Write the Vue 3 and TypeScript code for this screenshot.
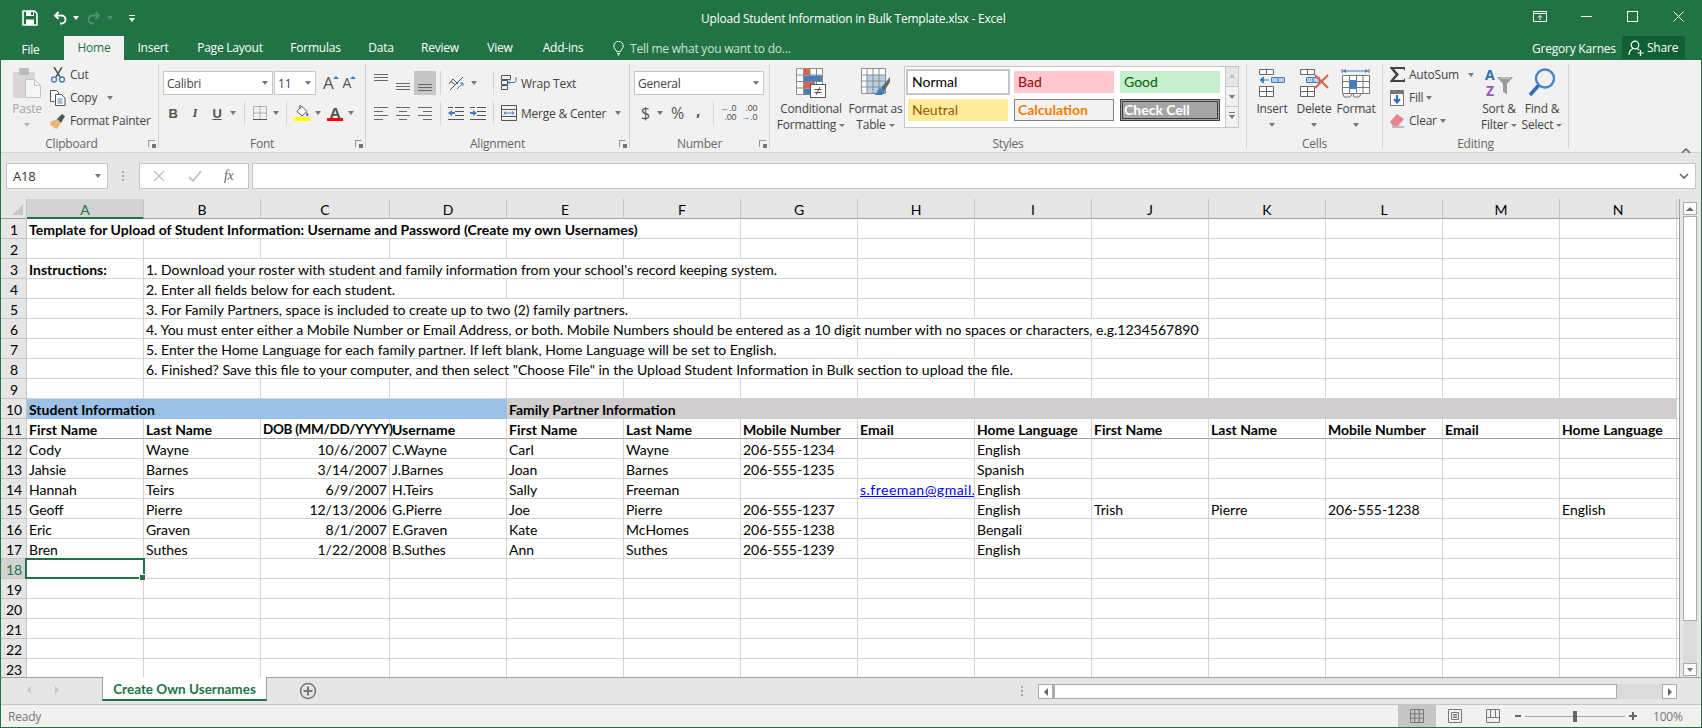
<script setup lang="ts">
interface Cell { t?: string; span?: number; cls?: string; link?: boolean }
interface Row { n: number; cells: Cell[]; cls?: string }
interface Tab { name: string; w: number }

const colLetters: string[] = ['A','B','C','D','E','F','G','H','I','J','K','L','M','N']
const tabs: Tab[] = [
  { name: 'Insert', w: 58 }, { name: 'Page Layout', w: 96 }, { name: 'Formulas', w: 75 }, { name: 'Data', w: 56 },
  { name: 'Review', w: 62 }, { name: 'View', w: 58 }, { name: 'Add-ins', w: 68 }
]

function text(t: string): Cell { return t ? { t } : {} }
function blanks(n: number): Cell[] { return Array.from({ length: n }, () => ({})) }
function wide(t: string, span: number, lead?: Cell): Cell[] {
  const first: Cell = lead ?? {}
  return [first, { t, span }, ...blanks(14 - 1 - span)]
}
function data(r: string[]): Cell[] {
  return r.map((t, i): Cell => {
    if (i === 2) return { t, cls: 'right' }
    if (t.startsWith('s.freeman')) return { t, cls: 'clip link' }
    return text(t)
  })
}

const rows: Row[] = [
  { n: 1, cells: [{ t: 'Template for Upload of Student Information: Username and Password (Create my own Usernames)', span: 6, cls: 'bold' }, ...blanks(8)] },
  { n: 2, cells: blanks(14) },
  { n: 3, cells: wide("1. Download your roster with student and family information from your school's record keeping system.", 6, { t: 'Instructions:', cls: 'bold' }) },
  { n: 4, cells: wide('2. Enter all fields below for each  student.', 3) },
  { n: 5, cells: wide('3. For Family Partners, space is included to create up to two (2) family partners.', 5) },
  { n: 6, cells: wide('4. You must enter either a Mobile Number or Email Address, or both. Mobile Numbers should be entered as a 10 digit number with no spaces or characters, e.g.1234567890', 9) },
  { n: 7, cells: wide('5. Enter the Home Language for each family partner. If left blank, Home Language will be set to English.', 6) },
  { n: 8, cells: wide('6. Finished? Save this file to your computer, and then select "Choose File" in the Upload Student Information in Bulk section to upload the file.', 8) },
  { n: 9, cells: blanks(14) },
  { n: 10, cells: [{ t: 'Student Information', span: 4, cls: 'bold blue' }, { t: 'Family Partner Information', span: 10, cls: 'bold grey' }] },
  { n: 11, cls: 'heads', cells: ['First Name','Last Name','DOB (MM/DD/YYYY)','Username','First Name','Last Name','Mobile Number','Email','Home Language','First Name','Last Name','Mobile Number','Email','Home Language'].map((t, i) => ({ t, cls: i === 2 ? 'bold tight' : 'bold' })) },
  { n: 12, cells: data(['Cody','Wayne','10/6/2007','C.Wayne','Carl','Wayne','206-555-1234','','English','','','','','']) },
  { n: 13, cells: data(['Jahsie','Barnes','3/14/2007','J.Barnes','Joan','Barnes','206-555-1235','','Spanish','','','','','']) },
  { n: 14, cells: data(['Hannah','Teirs','6/9/2007','H.Teirs','Sally','Freeman','','s.freeman@gmail.com','English','','','','','']) },
  { n: 15, cells: data(['Geoff','Pierre','12/13/2006','G.Pierre','Joe','Pierre','206-555-1237','','English','Trish','Pierre','206-555-1238','','English']) },
  { n: 16, cells: data(['Eric','Graven','8/1/2007','E.Graven','Kate','McHomes','206-555-1238','','Bengali','','','','','']) },
  { n: 17, cells: data(['Bren','Suthes','1/22/2008','B.Suthes','Ann','Suthes','206-555-1239','','English','','','','','']) },
  { n: 18, cls: 'selrow', cells: [{ cls: 'active' }, ...blanks(13)] },
  ...[19,20,21,22,23].map((n): Row => ({ n, cells: blanks(14) }))
]
</script>

<template>
  <div class="app">
    <header class="titlebar">
      <div class="qat">
        <svg class="i-save" width="16" height="16" viewBox="0 0 16 16"><path d="M1 1h11.5L15 3.5V15H1z" fill="none" stroke="#fff" stroke-width="1.6"/><rect x="4" y="1" width="8" height="5" fill="#fff"/><rect x="9" y="2" width="2" height="3" fill="#217346"/><rect x="4" y="9.5" width="8" height="5.5" fill="#fff"/></svg>
        <svg class="i-undo" width="14" height="16" viewBox="0 0 14 16"><path d="M5.5 2 2 5.5 5.5 9M2 5.5h6.5a4 4 0 0 1 0 8H7" fill="none" stroke="#fff" stroke-width="1.8"/></svg>
        <i class="dd white"></i>
        <svg class="i-redo" width="14" height="16" viewBox="0 0 14 16"><path d="M8.5 2 12 5.5 8.5 9M12 5.500H5.500a4 4 0 0 0 0 8H7" fill="none" stroke="#4f9270" stroke-width="1.8"/></svg>
        <i class="dd dim"></i>
        <svg class="i-cust" width="6" height="8" viewBox="0 0 6 8"><path d="M0 0h6v1H0zM0 3h6L3 7z" fill="#fff"/></svg>
      </div>
      <div class="doc-title">Upload Student Information in Bulk Template.xlsx - Excel</div>
      <div class="winctl">
        <svg width="14" height="11" viewBox="0 0 14 11"><path d="M.5.500h13v10H.5zM.5 2.500h13M7 9V4.500M5 6.500l2-2 2 2" fill="none" stroke="#fff"/></svg>
        <svg class="w-min" width="11" height="1" viewBox="0 0 11 1"><rect width="11" height="1" fill="#fff"/></svg>
        <svg class="w-max" width="11" height="11" viewBox="0 0 11 11"><rect x=".5" y=".5" width="10" height="10" fill="none" stroke="#fff"/></svg>
        <svg class="w-max" width="11" height="11" viewBox="0 0 11 11"><path d="M.5.500l10 10M10.500.500l-10 10" stroke="#fff"/></svg>
      </div>
    </header>

    <nav class="tabbar">
      <span class="file">File</span>
      <span class="tab on">Home</span>
      <span v-for="t in tabs" :key="t.name" class="tab" :style="{ width: t.w + 'px' }">{{ t.name }}</span>
      <span class="tell">
        <svg width="11" height="15" viewBox="0 0 11 15"><path d="M3.500 10.500C3 8.500.8 7.500.8 5a4.700 4.700 0 0 1 9.400 0c0 2.500-2.200 3.500-2.700 5.500zM4 12.500h3M4.500 14h2" fill="none" stroke="#fff"/></svg>
        <span>Tell me what you want to do...</span>
      </span>
      <span class="user">Gregory Karnes</span>
      <span class="share">
        <svg width="16" height="16" viewBox="0 0 16 16"><circle cx="7" cy="5" r="3.800" fill="none" stroke="#fff" stroke-width="1.200"/><path d="M1 15c0-3.500 2-5.500 4-6.500M9 8.500c.8.400 1.500.9 2 1.500M9.500 13h6M12.500 10v6" fill="none" stroke="#fff" stroke-width="1.200"/></svg>
        Share
      </span>
    </nav>

    <section class="ribbon">
      <!-- Clipboard -->
      <div class="group g-clip">
        <div class="body">
          <div class="big paste">
            <svg width="28" height="30" viewBox="0 0 28 30"><rect x="0" y="4" width="22" height="26" rx="1" fill="#d8d6d6"/><rect x="6" y="0" width="10" height="7" rx="1" fill="#bdbbbb"/><path d="M12.500 11.500h9l6 6v12h-15z" fill="#f6f6f6" stroke="#c4c2c2"/><path d="M21.500 11.500v6h6" fill="none" stroke="#c4c2c2"/></svg>
            <span class="l1 off">Paste</span>
            <i class="dd off-dd"></i>
          </div>
          <div class="smalls">
            <div class="sm">
              <svg class="slot" width="16" height="16" viewBox="0 0 16 16"><path d="M4 0l6 10M12 0L6 10" stroke="#555" stroke-width="1.500" fill="none"/><circle cx="4" cy="12.500" r="2.500" fill="none" stroke="#3f7fc1" stroke-width="1.300"/><circle cx="12" cy="12.500" r="2.500" fill="none" stroke="#3f7fc1" stroke-width="1.300"/></svg>
              <span>Cut</span>
            </div>
            <div class="sm">
              <svg class="slot" width="16" height="16" viewBox="0 0 16 16"><path d="M4.500 11.500H.5V.5h6l2 2v2" fill="#fff" stroke="#555"/><path d="M5.500 4.500h6l3.500 3.500v7.500H5.500z" fill="#fff" stroke="#555"/><path d="M7.500 9h5M7.500 11h5M7.500 13h5" stroke="#3f7fc1"/></svg>
              <span>Copy</span><i class="dd ml-copy"></i>
            </div>
            <div class="sm">
              <svg class="slot" width="16" height="16" viewBox="0 0 16 16"><path d="M0 9l7-3 4 4-4 6-3-1-1-2-2 0z" fill="#e8b878"/><path d="M7 6l5-5 3 2-4 7z" fill="#555"/></svg>
              <span>Format Painter</span>
            </div>
          </div>
        </div>
        <div class="glabel">Clipboard<i class="launch"></i></div>
      </div>

      <!-- Font -->
      <div class="group g-font">
        <div class="body col">
          <div class="row r1">
            <div class="combo c-font"><span>Calibri</span><i class="dd"></i></div>
            <div class="combo c-size"><span>11</span><i class="dd"></i></div>
            <span class="aa a-grow">A<i class="up"></i></span>
            <span class="aa a-shrink">A<i class="up"></i></span>
          </div>
          <div class="row r2">
            <b class="fmt f-b">B</b>
            <em class="fmt f-i">I</em>
            <u class="fmt f-u">U</u>
            <i class="dd ml-u"></i>
            <i class="vsep sep-a"></i>
            <svg class="ic-b" width="14" height="14" viewBox="0 0 14 14"><path d="M.5.500h13v13H.5zM7 .5v13M.5 7h13" fill="none" stroke="#777" stroke-dasharray="1 1"/><path d="M0 13.500h14" stroke="#555"/></svg>
            <i class="dd ml-b"></i>
            <i class="vsep sep-b"></i>
            <svg class="ic-fill" width="16" height="16" viewBox="0 0 16 16"><path d="M7.500 1l5.500 5.500-5 4.500L3 6.500z" fill="#fff" stroke="#555"/><path d="M6 0v4" stroke="#555"/><path d="M13 7c1 1.500 1.500 2 1.500 3a1.200 1.200 0 0 1-2.500 0c0-1 .500-1.500 1-3z" fill="#3f7fc1"/><rect y="12" width="16" height="4" fill="#ffff00"/></svg>
            <i class="dd ml-f"></i>
            <span class="fcolor">A</span>
            <i class="dd ml-f"></i>
          </div>
        </div>
        <div class="glabel">Font<i class="launch"></i></div>
      </div>

      <!-- Alignment -->
      <div class="group g-align">
        <div class="body col">
          <div class="row r1 ra">
            <span class="slot22 v-top"><i class="lines ln3"></i></span>
            <span class="slot22 v-mid"><i class="lines ln3"></i></span>
            <span class="slot22 hl"><i class="lines ln3"></i></span>
            <i class="vsep sep-al"></i>
            <svg class="ic-or" width="16" height="16" viewBox="0 0 16 16"><path d="M2 15L15 2" stroke="#555"/><path d="M1 9l4-5 5 5M3 6.500l4 3" fill="none" stroke="#555"/><path d="M9 14l6-6M15 8v3M15 8h-3" fill="none" stroke="#3f7fc1"/></svg>
            <i class="dd ml-or"></i>
            <i class="vsep sep-wt"></i>
            <svg class="ic-w" width="16" height="16" viewBox="0 0 16 16"><path d="M.5.5h9v4h-9zM.5 5.500h6v4h-6zM.5 10.500h6v4h-6z" fill="none" stroke="#555"/><path d="M7 7.500h6a2 2 0 0 0 2-2V2M7 7.500l2-2M7 7.500l2 2" fill="none" stroke="#3f7fc1"/></svg>
            <span class="atext">Wrap Text</span>
          </div>
          <div class="row r2 ra">
            <span class="slot22"><i class="lines ln5 al-l"></i></span>
            <span class="slot22"><i class="lines ln5 al-c"></i></span>
            <span class="slot22"><i class="lines ln5 al-r"></i></span>
            <i class="vsep sep-al"></i>
            <svg class="ic-or" width="16" height="13" viewBox="0 0 16 13"><path d="M7 .5h9M7 4.500h9M7 8.500h9M0 12.500h16M0 .5h5" stroke="#555" fill="none"/><path d="M0 6l4-3v2h3v2H4v2z" fill="#3f7fc1"/></svg>
            <svg class="ic-in2" width="16" height="13" viewBox="0 0 16 13"><path d="M7 .5h9M7 4.500h9M7 8.500h9M0 12.500h16M0 .5h5" stroke="#555" fill="none"/><path d="M7 6L3 3v2H0v2h3v2z" fill="#3f7fc1"/></svg>
            <i class="vsep sep-mc"></i>
            <svg class="ic-w" width="16" height="16" viewBox="0 0 16 16"><path d="M.5.5h15v15H.5zM.5 4.500h15M.5 11.500h15" fill="none" stroke="#555"/><path d="M3 8h10M3 8l2-1.500M3 8l2 1.500M13 8l-2-1.500M13 8l-2 1.500" fill="none" stroke="#3f7fc1"/></svg>
            <span class="atext">Merge &amp; Center</span>
            <i class="dd ml-mc"></i>
          </div>
        </div>
        <div class="glabel">Alignment<i class="launch"></i></div>
      </div>

      <!-- Number -->
      <div class="group g-num">
        <div class="body col">
          <div class="row r1">
            <div class="combo c-gen"><span>General</span><i class="dd"></i></div>
          </div>
          <div class="row r2">
            <span class="nsym n-d">$</span>
            <i class="dd ml-d"></i>
            <span class="nsym n-p">%</span>
            <span class="nsym n-c">,</span>
            <i class="vsep sep-n"></i>
            <span class="dec d1"><span><b>←</b>.0</span><span>.00</span></span>
            <span class="dec d2"><span>.00</span><span><b>→</b>.0</span></span>
          </div>
        </div>
        <div class="glabel">Number<i class="launch"></i></div>
      </div>

      <!-- Styles -->
      <div class="group g-styles">
        <div class="body">
          <div class="big b-cf">
            <svg width="30" height="30" viewBox="0 0 30 30"><path d="M.5.500h26v26H.5zM7.500.5v26M.5 7h26M.5 13.500h26M.5 20h26M14 .5v26M20.500.5v26" fill="#fff" stroke="#8c8c8c"/><rect x="8" y="1" width="6" height="6" fill="#d9644a"/><rect x="8" y="7.500" width="18" height="6" fill="#4a7eba"/><rect x="8" y="14" width="11" height="6" fill="#d9644a"/><rect x="8" y="20.500" width="6" height="6" fill="#4a7eba"/><rect x="14.500" y="16.500" width="15" height="13" fill="#fff" stroke="#555"/><path d="M18.500 21.500h7M18.500 24.500h7M24 19l-4 8" stroke="#555"/></svg>
            <span class="l1">Conditional</span>
            <span class="l2">Formatting<i class="dd sm-dd"></i></span>
          </div>
          <div class="big b-ft">
            <svg width="30" height="30" viewBox="0 0 30 30"><path d="M.5.500h24v25H.5z" fill="#fff" stroke="#8c8c8c"/><rect x="6" y="7" width="18" height="18" fill="#b8cfe8"/><path d="M6 .5v25M12 .5v25M18 .5v25M.5 7h24M.5 13h24M.5 19h24" stroke="#8c8c8c"/><path d="M29 9l-9 11 3 3 6-9z" fill="#666"/><path d="M19 20c-3 1-2 5-6 7h8c3-2 3-4 2-5z" fill="#3f7fc1"/></svg>
            <span class="l1">Format as</span>
            <span class="l2">Table<i class="dd sm-dd"></i></span>
          </div>
          <div class="gallery">
            <div class="styles-grid">
              <div class="st normal">Normal</div>
              <div class="st bad">Bad</div>
              <div class="st good">Good</div>
              <div class="st neutral">Neutral</div>
              <div class="st calc">Calculation</div>
              <div class="st check">Check Cell</div>
            </div>
            <div class="gscroll">
              <span class="gb off-gb"><i class="tri-up"></i></span>
              <span class="gb"><i class="dd"></i></span>
              <span class="gb more"><i class="dd"></i></span>
            </div>
          </div>
        </div>
        <div class="glabel">Styles</div>
      </div>

      <!-- Cells -->
      <div class="group g-cells">
        <div class="body">
          <div class="big b-cell">
            <svg width="30" height="30" viewBox="0 0 30 30"><path d="M2.500 1.500h14v5h-14zM9.500 1.500v5M2.500 18.500h14v10h-14zM2.500 23.500h14M9.500 18.500v10" fill="#fff" stroke="#666"/><path d="M14.500 9.500h13v5h-13zM21 9.500v5" fill="#b8cfe8" stroke="#4a7eba"/><path d="M3 12h9M3 12l3.500-3v6z" fill="#3f7fc1" stroke="#3f7fc1"/></svg>
            <span class="l1">Insert</span><i class="dd lone"></i>
          </div>
          <div class="big b-cell">
            <svg width="30" height="30" viewBox="0 0 30 30"><path d="M1.500 1.500h14v5h-14zM8.500 1.500v5M1.500 18.500h14v10h-14zM1.500 23.500h14M8.500 18.500v10" fill="#fff" stroke="#666"/><path d="M7.500 9.500h13v5h-13zM14 9.500v5" fill="#b8cfe8" stroke="#4a7eba"/><path d="M16 7l13 13M29 7L16 20" stroke="#d9644a" stroke-width="2"/></svg>
            <span class="l1">Delete</span><i class="dd lone"></i>
          </div>
          <div class="big b-cell">
            <svg width="30" height="30" viewBox="0 0 30 30"><path d="M1 3h27M1 1v4M28 1v4" stroke="#3f7fc1"/><path d="M2 3l3-2v4zM27 3l-3-2v4z" fill="#3f7fc1"/><path d="M1.500 7.500h27v18h-27zM1.500 13.500h27M1.500 19.500h27M8.500 7.500v18M15.500 7.500v18M22 7.500v18" fill="#fff" stroke="#777"/><rect x="8.500" y="12" width="7.500" height="9" fill="#4a7eba"/><path d="M2 26l1 3h6l2-3M12 26l1 3h5l2-3" fill="none" stroke="#777"/></svg>
            <span class="l1">Format</span><i class="dd lone"></i>
          </div>
        </div>
        <div class="glabel">Cells</div>
      </div>

      <!-- Editing -->
      <div class="group g-edit">
        <div class="body">
          <div class="smalls s-edit">
            <div class="sm">
              <svg class="slot15" width="15" height="15" viewBox="0 0 15 15"><path d="M0 0h15v4l-1.500-2H4l5 5.500L4 13h9.500l1.500-2v4H0v-1l5.500-6.500L0 1z" fill="#444"/></svg>
              <span>AutoSum</span><i class="dd ml-as"></i>
            </div>
            <div class="sm">
              <svg class="slot15" width="15" height="16" viewBox="0 0 15 16"><rect x=".5" y=".5" width="13" height="15" fill="#fff" stroke="#777"/><rect x="1" y="1" width="12" height="3" fill="#777"/><path d="M7 5v7M4 9l3 3.500L10 9" fill="none" stroke="#2d6db5" stroke-width="2"/></svg>
              <span>Fill</span><i class="dd ml-fi"></i>
            </div>
            <div class="sm">
              <svg class="slot15" width="15" height="15" viewBox="0 0 15 15"><path d="M0 9l7-8 7 5-6 7H3z" fill="#e5838f"/><path d="M2 14h12" stroke="#888"/></svg>
              <span>Clear</span><i class="dd ml-fi"></i>
            </div>
          </div>
          <div class="big b-sort">
            <svg width="30" height="30" viewBox="0 0 30 30"><text x="1" y="12" class="sort-a">A</text><text x="2" y="28" class="sort-z">Z</text><path d="M13 9h16l-6 7v10l-4-2v-8z" fill="#9c9c9c"/><path d="M16 10h10" stroke="#ddd"/></svg>
            <span class="l1">Sort &amp;</span>
            <span class="l2">Filter<i class="dd sm-dd"></i></span>
          </div>
          <div class="big b-find">
            <svg width="28" height="30" viewBox="0 0 28 30"><circle cx="17" cy="10.500" r="9" fill="none" stroke="#4a86c5" stroke-width="2.500"/><path d="M10.500 17.500L2 27" stroke="#2d6db5" stroke-width="3.500"/></svg>
            <span class="l1">Find &amp;</span>
            <span class="l2">Select<i class="dd sm-dd"></i></span>
          </div>
        </div>
        <div class="glabel">Editing</div>
      </div>

      <div class="collapse">
        <svg width="10" height="6" viewBox="0 0 10 6"><path d="M1 5l4-4 4 4" fill="none" stroke="#666" stroke-width="1.600"/></svg>
      </div>
    </section>

    <section class="fbar">
      <div class="namebox"><span>A18</span><i class="dd nb-dd"></i></div>
      <div class="grip"><i></i><i></i><i></i></div>
      <div class="fx">
        <svg width="12" height="12" viewBox="0 0 12 12"><path d="M1 1l10 10M11 1L1 11" stroke="#c6c6c6" stroke-width="1.600"/></svg>
        <svg class="chk" width="14" height="12" viewBox="0 0 14 12"><path d="M1 7l4 4 8-10" fill="none" stroke="#c6c6c6" stroke-width="2"/></svg>
        <em class="fxt">fx</em>
      </div>
      <div class="finput">
        <svg width="10" height="6" viewBox="0 0 10 6"><path d="M1 1l4 4 4-4" fill="none" stroke="#666" stroke-width="1.600"/></svg>
      </div>
    </section>

    <section class="sheet">
      <div class="grid">
        <div class="sgrid head">
          <div class="corner"><i></i></div>
          <div v-for="(c, i) in colLetters" :key="c" class="colh" :class="{ sel: i === 0 }">{{ c }}</div>
          <div class="colh stub"></div>
        </div>
        <div v-for="r in rows" :key="r.n" class="sgrid" :class="r.cls">
          <div class="rowh">{{ r.n }}</div>
          <div
            v-for="(c, i) in r.cells"
            :key="i"
            class="cell"
            :class="c.cls"
            :style="c.span ? { gridColumn: 'span ' + c.span } : undefined"
          ><span v-if="c.t">{{ c.t }}</span></div>
          <div class="cell stub"></div>
        </div>
      </div>
      <aside class="vscroll">
        <span class="sb-btn"><i class="tri-up dark"></i></span>
        <span class="sb-thumb"></span>
        <span class="sb-track"></span>
        <span class="sb-btn"><i class="dd"></i></span>
      </aside>
    </section>

    <section class="sheetbar">
      <span class="nav"><i class="tl"></i><i class="tr"></i></span>
      <span class="stab">Create Own Usernames</span>
      <svg class="plus" width="18" height="18" viewBox="0 0 18 18"><circle cx="9" cy="9" r="7.500" fill="none" stroke="#777" stroke-width="1.500"/><path d="M4.500 9h9M9 4.500v9" stroke="#777" stroke-width="2"/></svg>
      <span class="sgrip"><i></i><i></i><i></i></span>
      <div class="hscroll">
        <span class="hb"><i class="tl dark"></i></span>
        <span class="hthumb"></span>
        <span class="htrack"></span>
        <span class="hb"><i class="tr dark"></i></span>
      </div>
    </section>

    <footer class="status">
      <span class="ready">Ready</span>
      <span class="view on">
        <svg width="14" height="14" viewBox="0 0 14 14"><path d="M.5.500h13v13H.5zM4.800.5v13M9.200.5v13M.5 4.800h13M.5 9.200h13" fill="none" stroke="#777"/></svg>
      </span>
      <span class="view">
        <svg width="14" height="14" viewBox="0 0 14 14"><path d="M.5.500h13v13H.5zM3.500 3.500h7v7h-7zM5 5.500h4M5 7h4M5 8.500h4" fill="none" stroke="#777"/></svg>
      </span>
      <span class="view">
        <svg width="14" height="14" viewBox="0 0 14 14"><path d="M.5.500h13v13H.5zM.5 8.500h13M4.500.5v8M9.500.5v8" fill="none" stroke="#777"/></svg>
      </span>
      <span class="zm zminus"></span>
      <span class="slider"><i></i></span>
      <span class="zplus"></span>
      <span class="pct">100%</span>
    </footer>
  </div>
</template>

<style>
html, body { margin: 0; background: #fff; }
</style>

<style scoped>
.app {
  width: 1702px; height: 728px; box-sizing: border-box; overflow: hidden;
  border-left: 1px solid #217346; border-right: 1px solid #217346; border-bottom: 1px solid #217346;
  display: flex; flex-direction: column;
  font: 12px "Open Sans", "Noto Sans", sans-serif; letter-spacing: -.22px; color: #444; background: #f1f1f1;
}
i { display: block; font-style: normal; }

/* title bar */
.titlebar { height: 36px; background: #217346; display: flex; align-items: center; color: #fff; flex: none; }
.qat { width: 700px; flex: none; display: flex; align-items: center; }
.i-save { margin-left: 21px; }
.i-undo { margin-left: 15px; }
.qat .dd { margin-left: 6px; }
.i-redo { margin-left: 8px; }
.i-cust { margin-left: 16px; margin-top: 2px; }
.doc-title { width: 832px; flex: none; white-space: nowrap; }
.winctl { display: flex; align-items: center; margin-top: -4px; }
.w-min { margin-left: 34px; }
.w-max { margin-left: 35px; }

.dd { width: 0; height: 0; border-left: 3.5px solid transparent; border-right: 3.5px solid transparent; border-top: 4px solid #777; flex: none; }
.dd.white { border-top-color: #fff; }
.dd.dim { border-top-color: #4f9270; }

/* tabs */
.tabbar { height: 24px; background: #217346; display: flex; align-items: center; color: #fff; flex: none; position: relative; white-space: nowrap; }
.file { width: 63px; flex: none; text-align: center; padding-right: 4px; box-sizing: border-box; margin-top: 2px; }
.tab { height: 24px; line-height: 24px; flex: none; text-align: center; }
.tab.on { width: 60px; background: #f1f1f1; color: #217346; }
.tell { display: flex; align-items: center; gap: 6px; margin-left: 16px; color: #cfe1d6; width: 919px; flex: none; box-sizing: border-box; }
.user { width: 90px; flex: none; }
.share { width: 63px; height: 23px; margin-top: -1px; box-sizing: border-box; background: #105e33; display: flex; align-items: center; gap: 3px; padding-left: 6px; flex: none; }

/* ribbon */
.ribbon { height: 93px; flex: none; box-sizing: border-box; padding-top: 4px; background: #f1f1f1; border-bottom: 1px solid #d4d4d4; display: flex; }
.group { height: 84px; box-sizing: border-box; border-right: 1px solid #d4d4d4; display: flex; flex-direction: column; flex: none; position: relative; }
.body { height: 72px; display: flex; flex: none; }
.col { flex-direction: column; }
.glabel { height: 16px; line-height: 16px; text-align: center; color: #666; position: relative; flex: none; }
.launch { position: absolute; right: 3px; top: 4px; width: 7px; height: 7px; border-left: 1px solid #999; border-top: 1px solid #999; box-sizing: border-box; }
.launch::after { content: ""; position: absolute; right: -1px; bottom: -1px; width: 4px; height: 4px; background: #777; }

.g-clip { width: 158px; }
.g-clip .glabel { padding-right: 16px; box-sizing: border-box; }
.g-font { width: 207px; }
.g-align { width: 264px; }
.g-num { width: 140px; }
.g-styles { width: 477px; }
.g-cells { width: 136px; }
.g-edit { width: 186px; }

.big { display: flex; flex-direction: column; align-items: center; padding-top: 4px; box-sizing: border-box; flex: none; }
.big svg { flex: none; height: 30px; }
.l1, .l2 { display: flex; align-items: center; gap: 3px; height: 16px; line-height: 16px; white-space: nowrap; }
.l1 { margin-top: 3px; }
.off { color: #a6a6a6; }
.off-dd { margin-top: 6px; border-top-color: #b5b5b5; }
.lone { margin-top: 6px; }
.sm-dd { border-left-width: 3px; border-right-width: 3px; border-top-width: 3px; }

.paste { width: 38px; margin-left: 7px; }
.smalls { margin-left: 4px; margin-top: -1px; display: flex; flex-direction: column; }
.sm { height: 23px; display: flex; align-items: center; white-space: nowrap; }
.slot { width: 16px; margin-right: 4px; flex: none; }
.slot15 { margin-right: 4px; flex: none; }
.ml-copy { margin-left: 10px; }

.row { display: flex; align-items: center; flex: none; }
.r1 { height: 24px; margin-top: 7px; }
.r2 { height: 24px; margin-top: 6px; }

.combo { height: 24px; box-sizing: border-box; background: #fff; border: 1px solid #c6c6c6; display: flex; align-items: center; justify-content: space-between; padding: 0 4px 0 3px; flex: none; }
.combo .dd { border-left-width: 3px; border-right-width: 3px; }
.c-font { width: 110px; margin-left: 4px; }
.c-size { width: 42px; margin-left: 1px; }
.aa { color: #555; position: relative; display: block; line-height: 20px; }
.a-grow { margin-left: 7px; font-size: 17px; }
.a-shrink { margin-left: 9px; font-size: 14px; }
.aa .up { position: absolute; right: -5px; top: 3px; width: 0; border-left: 3px solid transparent; border-right: 3px solid transparent; border-bottom: 3px solid #3f7fc1; }

.fmt { font-size: 13px; font-family: "Liberation Sans", sans-serif; color: #555; width: 10px; text-align: center; font-weight: 700; }
.f-b { margin-left: 9px; }
.f-i { margin-left: 12px; font-family: "Liberation Serif", serif; }
.f-u { margin-left: 12px; }
.ml-u { margin-left: 8px; border-left-width: 3px; border-right-width: 3px; }
.vsep { width: 1px; height: 24px; background: #d4d4d4; flex: none; }
.sep-a { margin-left: 8px; }
.ic-b { margin-left: 8px; }
.ml-b { margin-left: 6px; border-left-width: 3px; border-right-width: 3px; }
.sep-b { margin-left: 7px; }
.ic-fill { margin-left: 7px; }
.ml-f { margin-left: 5px; border-left-width: 3px; border-right-width: 3px; }
.fcolor { width: 16px; margin-left: 6px; text-align: center; font: 700 15px/14px "Open Sans", sans-serif; color: #555; border-bottom: 3px solid #ff0000; box-sizing: border-box; height: 16px; }

.ra { padding-left: 4px; }
.slot22 { width: 22px; height: 24px; display: flex; align-items: center; justify-content: center; flex: none; }
.hl { background: #c6c6c6; align-items: flex-end; padding-bottom: 4px; box-sizing: border-box; }
.v-top { align-items: flex-start; padding-top: 3px; box-sizing: border-box; }
.v-mid { padding-top: 6px; box-sizing: border-box; }
.lines { width: 14px; background: repeating-linear-gradient(#666 0 1px, transparent 1px 3px); }
.ln3 { height: 7px; }
.ln5 { height: 13px; background: repeating-linear-gradient(#666 0 1px, transparent 1px 4px); }
.al-l { background:
  linear-gradient(#666, #666) 0 0/14px 1px no-repeat, linear-gradient(#666, #666) 0 4px/9px 1px no-repeat,
  linear-gradient(#666, #666) 0 8px/14px 1px no-repeat, linear-gradient(#666, #666) 0 12px/9px 1px no-repeat; }
.al-c { background:
  linear-gradient(#666, #666) 0 0/14px 1px no-repeat, linear-gradient(#666, #666) 3px 4px/8px 1px no-repeat,
  linear-gradient(#666, #666) 0 8px/14px 1px no-repeat, linear-gradient(#666, #666) 3px 12px/8px 1px no-repeat; }
.al-r { background:
  linear-gradient(#666, #666) 0 0/14px 1px no-repeat, linear-gradient(#666, #666) 5px 4px/9px 1px no-repeat,
  linear-gradient(#666, #666) 0 8px/14px 1px no-repeat, linear-gradient(#666, #666) 5px 12px/9px 1px no-repeat; }
.sep-al { margin-left: 4px; }
.ic-or { margin-left: 7px; }
.ml-or { margin-left: 7px; border-left-width: 3px; border-right-width: 3px; }
.ic-in2 { margin-left: 6px; }
.sep-wt { margin-left: 16px; }
.sep-mc { margin-left: 7px; }
.ic-w { margin-left: 7px; }
.atext { margin-left: 4px; white-space: nowrap; }
.ml-mc { margin-left: 9px; border-left-width: 3px; border-right-width: 3px; }

.c-gen { width: 130px; margin-left: 4px; }
.nsym { color: #555; }
.n-d { font-size: 16px; margin-left: 11px; }
.ml-d { margin-left: 7px; border-left-width: 3px; border-right-width: 3px; }
.n-p { font-size: 16px; margin-left: 8px; }
.n-c { font-size: 16px; margin-left: 12px; font-weight: 700; margin-top: -6px; }
.sep-n { margin-left: 13px; }
.dec { display: flex; flex-direction: column; font: 9px/9px "Liberation Sans", sans-serif; color: #555; align-items: flex-end; width: 15px; flex: none; }
.dec b { color: #3f7fc1; font-weight: 700; }
.d1 { margin-left: 7px; }
.d2 { margin-left: 6px; }

.b-cf { width: 78px; margin-left: 2px; }
.b-ft { width: 51px; }
.gallery { margin-left: 3px; margin-top: 2px; height: 62px; box-sizing: border-box; display: flex; border: 1px solid #c6c6c6; border-right: none; background: #fff; flex: none; }
.styles-grid { width: 320px; box-sizing: border-box; padding: 4px 0 0 3px; display: grid; grid-template-columns: repeat(3, 100px); column-gap: 6px; row-gap: 6px; grid-template-rows: 22px 22px; }
.st { font: 14px/22px Lato, sans-serif; letter-spacing: 0; padding-left: 4px; box-sizing: border-box; white-space: nowrap; }
.normal { color: #000; background: #fff; outline: 2px solid #c6c6c6; outline-offset: 0; }
.bad { background: #ffc7ce; color: #9c0006; }
.good { background: #c6efce; color: #006100; }
.neutral { background: #ffeb9c; color: #9c5700; }
.calc { background: #f2f2f2; color: #fa7d00; font-weight: 700; border: 1px solid #7f7f7f; line-height: 20px; padding-left: 3px; }
.check { background: #a5a5a5; color: #fff; font-weight: 700; border: 3px double #3f3f3f; line-height: 16px; padding-left: 1px; }
.gscroll { width: 14px; display: flex; flex-direction: column; flex: none; margin-top: -1px; margin-bottom: -1px; }
.gb { height: 21px; box-sizing: border-box; border: 1px solid #c6c6c6; border-top-width: 0; display: flex; align-items: center; justify-content: center; background: #f1f1f1; }
.gb:first-child { border-top-width: 1px; }
.off-gb { background: #e6e6e6; }
.gb .dd { border-left-width: 3px; border-right-width: 3px; }
.more { position: relative; }
.more::before { content: ""; position: absolute; top: 5px; left: 3px; width: 6px; height: 1px; background: #777; }
.tri-up { width: 0; border-left: 3px solid transparent; border-right: 3px solid transparent; border-bottom: 4px solid #bbb; }
.tri-up.dark { border-left-width: 4px; border-right-width: 4px; border-bottom-color: #666; }

.b-cell { width: 42px; }
.g-cells .body { padding-left: 4px; }
.s-edit { width: 87px; margin-left: 7px; flex: none; }
.b-sort { width: 44px; }
.b-find { width: 42px; }
.sort-a { font: 700 14px "Open Sans", sans-serif; fill: #2d6db5; }
.sort-z { font: 700 14px "Open Sans", sans-serif; fill: #9b59b6; }
.ml-as { margin-left: 9px; border-left-width: 3px; border-right-width: 3px; }
.ml-fi { margin-left: 3px; border-left-width: 3px; border-right-width: 3px; }
.collapse { margin-left: 112px; padding-top: 77px; }

/* formula bar */
.fbar { height: 46px; flex: none; box-sizing: border-box; background: #e6e6e6; padding: 10px 5px 0 5px; display: flex; align-items: flex-start; }
.namebox { width: 102px; height: 26px; box-sizing: border-box; background: #fff; border: 1px solid #c6c6c6; display: flex; align-items: center; justify-content: space-between; padding: 0 6px; font-size: 13px; color: #333; }
.grip { width: 31px; height: 26px; display: flex; flex-direction: column; align-items: center; justify-content: center; gap: 2px; }
.grip i, .sgrip i { width: 2px; height: 2px; background: #a6a6a6; }
.fx { width: 110px; height: 26px; box-sizing: border-box; background: #fff; border: 1px solid #c6c6c6; display: flex; align-items: center; padding-left: 13px; }
.chk { margin-left: 23px; }
.fxt { font: italic 14px "Liberation Serif", serif; color: #666; margin-left: 22px; }
.finput { width: 1445px; margin-left: 3px; height: 26px; box-sizing: border-box; background: #fff; border: 1px solid #c6c6c6; display: flex; align-items: center; justify-content: flex-end; padding-right: 6px; }

/* sheet */
.sheet { height: 479px; flex: none; box-sizing: border-box; display: flex; background: #e6e6e6; border-bottom: 1px solid #9f9f9f; }
.grid { width: 1678px; flex: none; overflow: hidden; background: #fff; border-right: 1px solid #9f9f9f; box-sizing: content-box; font: 14px Lato, sans-serif; letter-spacing: 0; color: #000; }
.sgrid { display: grid; grid-template-columns: 26px 117px 117px 129px repeat(11, 117px) 2px; height: 20px; }
.corner { background: #e6e6e6; border-right: 1px solid #c6c6c6; border-bottom: 1px solid #9f9f9f; box-sizing: border-box; position: relative; height: 20px; }
.corner i { position: absolute; right: 3px; bottom: 3px; width: 0; border-left: 11px solid transparent; border-bottom: 11px solid #c6c6c6; }
.colh { height: 20px; box-sizing: border-box; background: #e6e6e6; border-right: 1px solid #c6c6c6; border-bottom: 1px solid #9f9f9f; text-align: center; line-height: 21px; }
.colh.sel { background: #d2d2d2; border-bottom: 2px solid #217346; color: #217346; }
.rowh { height: 20px; box-sizing: border-box; background: #e6e6e6; border-right: 1px solid #c6c6c6; border-bottom: 1px solid #c6c6c6; text-align: center; line-height: 22px; padding-left: 1px; }
.selrow .rowh { background: #d2d2d2; color: #217346; }
.cell { height: 20px; box-sizing: border-box; border-right: 1px solid #d4d4d4; border-bottom: 1px solid #d4d4d4; padding: 0 2px; line-height: 21px; white-space: nowrap; overflow: visible; min-width: 0; position: relative; }
.bold { font-weight: 700; }
.right { text-align: right; }
.clip { overflow: hidden; }
.tight { font-size: 13.5px; letter-spacing: -.3px; padding-right: 0; }
.link { color: #0000ff; text-decoration: underline; letter-spacing: .5px; }
.blue { background: #9bc2e6; border-color: #9bc2e6; }
.grey { background: #d0cece; border-color: #d0cece; }
.heads .cell { border-bottom-color: #9f9f9f; }
.heads .rowh { border-bottom-color: #9f9f9f; }
.active::after { content: ""; position: absolute; left: -2px; top: -1px; right: -2px; bottom: -1px; border: 2px solid #217346; box-sizing: border-box; }
.active::before { content: ""; position: absolute; right: -3px; bottom: -3px; width: 5px; height: 5px; background: #217346; border: 1px solid #fff; z-index: 2; box-sizing: content-box; }
.stub { padding: 0; border-right: none; }

.vscroll { width: 14px; margin-left: 3px; padding-top: 3px; height: 474px; display: flex; flex-direction: column; flex: none; box-sizing: content-box; }
.sb-btn { height: 13px; flex: none; box-sizing: border-box; background: #fff; border: 1px solid #ababab; display: flex; align-items: center; justify-content: center; }
.sb-thumb { height: 405px; margin-top: 1px; flex: none; box-sizing: border-box; background: #fff; border: 1px solid #ababab; }
.sb-track { flex: 1; background: #dbdbdb; }

/* sheet tabs */
.sheetbar { height: 27px; flex: none; box-sizing: border-box; background: #e6e6e6; border-bottom: 1px solid #c6c6c6; display: flex; align-items: flex-start; position: relative; }
.nav { width: 101px; height: 24px; display: flex; align-items: center; padding-left: 26px; box-sizing: border-box; gap: 24px; flex: none; }
.tl, .tr { width: 0; border-top: 4px solid transparent; border-bottom: 4px solid transparent; }
.tl { border-right: 4px solid #c6c6c6; }
.tr { border-left: 4px solid #c6c6c6; }
.tl.dark { border-right-color: #666; }
.tr.dark { border-left-color: #666; }
.stab { width: 165px; height: 24px; margin-top: -1px; box-sizing: border-box; background: #fff; border-left: 1px solid #9f9f9f; border-right: 1px solid #9f9f9f; border-bottom: 2px solid #217346; text-align: center; font: 700 13.5px/25px Lato, sans-serif; letter-spacing: 0; color: #217346; flex: none; position: relative; z-index: 2; }
.plus { margin-left: 32px; margin-top: 4px; flex: none; }
.sgrip { margin-left: 704px; margin-top: 8px; width: 3px; display: flex; flex-direction: column; gap: 2px; flex: none; }
.hscroll { margin-left: 14px; margin-top: 6px; width: 639px; height: 15px; display: flex; flex: none; }
.hb { width: 15px; height: 15px; flex: none; box-sizing: border-box; background: #fff; border: 1px solid #ababab; display: flex; align-items: center; justify-content: center; }
.hthumb { width: 564px; box-sizing: border-box; background: #fff; border: 1px solid #ababab; flex: none; border-left-width: 2px; }
.htrack { flex: 1; background: #dbdbdb; }

/* status */
.status { height: 22px; flex: none; background: #f1f1f1; display: flex; align-items: center; color: #777; }
.ready { margin-left: 7px; width: 1390px; flex: none; }
.view { width: 38px; height: 22px; display: flex; align-items: center; justify-content: center; flex: none; }
.view.on { background: #c6c6c6; }
.zminus { width: 6px; height: 2px; background: #666; margin-left: 3px; flex: none; }
.slider { width: 100px; height: 1px; background: #a6a6a6; margin-left: 4px; position: relative; flex: none; }
.slider i { position: absolute; left: 48px; top: -5px; width: 4px; height: 11px; background: #666; }
.zplus { width: 8px; height: 8px; margin-left: 4px; flex: none; background: linear-gradient(#666, #666) center/8px 2px no-repeat, linear-gradient(#666, #666) center/2px 8px no-repeat; }
.pct { margin-left: 16px; flex: none; }
</style>
